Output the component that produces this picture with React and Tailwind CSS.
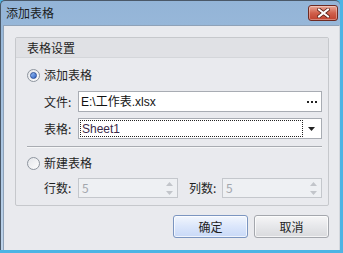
import React from 'react';

const font = { fontFamily: '"Noto Sans CJK SC", "Liberation Sans", sans-serif' };

function Radio({ checked }) {
  return (
    <span className="relative flex h-[13px] w-[13px] items-center justify-center rounded-full border border-[#8e959e] bg-gradient-to-br from-[#e4e6ea] to-[#fdfdfd]">
      {checked && (
        <span className="h-[7px] w-[7px] rounded-full border border-[#2a4f9a] bg-gradient-to-br from-[#9cc0f2] to-[#2f63c8]" />
      )}
    </span>
  );
}

function Spin({ width }) {
  return (
    <div className={`flex h-[20px] ${width} items-center justify-between border border-[#c4c7cc] bg-[#eef0f3] pl-[3px] pr-[4px]`}>
      <span className="text-[12px] text-[#a3a7ad]">5</span>
      <span className="flex flex-col gap-[5px]">
        <svg width="7" height="4" viewBox="0 0 7 4"><path d="M3.5 0L7 4H0z" fill="#c2c5ca" /></svg>
        <svg width="7" height="4" viewBox="0 0 7 4"><path d="M0 0h7L3.5 4z" fill="#c2c5ca" /></svg>
      </span>
    </div>
  );
}

export default function App() {
  return (
    <div className="h-[253px] w-[343px] overflow-hidden bg-[#4db4e4] pr-[3px] pb-[3px]" style={font}>
      <div className="flex h-full flex-col rounded-tl-[5px] rounded-tr-[5px] border-l border-t border-[#4a5868] bg-gradient-to-b from-[#93b4d7] to-[#bdd3ea]">
        {/* Title bar */}
        <div className="flex h-[24px] shrink-0 items-center justify-between pl-[5px] pr-[2px]">
          <span className="text-[12px] leading-none text-[#1b1b1b]">添加表格</span>
          <div className="flex h-[16px] w-[30px] items-center justify-center rounded-[3px] border border-[#6e2a22] bg-gradient-to-b from-[#e9a898] via-[#d0604c] to-[#c0412e] shadow-[inset_0_0_0_1px_rgba(255,255,255,0.35)]">
            <svg width="13" height="10" viewBox="0 0 13 10">
              <path d="M2 1.5L11 8.5M11 1.5L2 8.5" stroke="#5a2018" strokeWidth="3.6" strokeLinecap="square" />
              <path d="M2 1.5L11 8.5M11 1.5L2 8.5" stroke="#ffffff" strokeWidth="2" strokeLinecap="square" />
            </svg>
          </div>
        </div>

        {/* Content */}
        <div className="ml-[2px] flex flex-1 flex-col border-l border-r border-t border-l-[#8fa2b8] border-r-[#d3d7dd] border-t-[#8fa2b8] bg-[#e9eaee] pl-[11px] pr-[10px] pt-[11px]">
          {/* Group box */}
          <div className="flex h-[169px] flex-col rounded-[2px] border border-[#c6c8cc] bg-[#e9eaee]">
            <div className="flex h-[20px] items-center border-b border-[#d4d6da] bg-[#e0e1e5] pl-[11px] text-[12px] text-[#1e1e1e]">
              表格设置
            </div>
            <div className="flex flex-col pl-[11px] pr-[6px]">
              <label className="mt-[9px] flex h-[16px] items-center gap-[4px] text-[12px] text-[#1e1e1e]">
                <Radio checked />
                <span>添加表格</span>
              </label>

              <div className="mt-[8px] flex items-center">
                <span className="w-[51px] pl-[17px] text-[12px] text-[#1e1e1e]">文件:</span>
                <div className="flex h-[21px] flex-1 items-center justify-between border border-[#a8acb3] bg-white pl-[2px] pr-[4px]">
                  <span className="text-[12px] text-[#111]" style={{ fontFamily: '"Liberation Sans", "Noto Sans CJK SC", sans-serif' }}>
                    E:\工作表.xlsx
                  </span>
                  <span className="flex gap-[2px]">
                    <span className="h-[2px] w-[2px] bg-[#222]" />
                    <span className="h-[2px] w-[2px] bg-[#222]" />
                    <span className="h-[2px] w-[2px] bg-[#222]" />
                  </span>
                </div>
              </div>

              <div className="mt-[6px] flex items-center">
                <span className="w-[51px] pl-[17px] text-[12px] text-[#1e1e1e]">表格:</span>
                <div className="flex h-[21px] flex-1 items-center border border-[#a8acb3] bg-white p-[1px]">
                  <div className="flex h-full flex-1 items-center border border-dotted border-[#222] pl-[1px]">
                    <span className="text-[12px] text-[#3a2a4a]" style={{ fontFamily: '"Liberation Sans", sans-serif' }}>Sheet1</span>
                  </div>
                  <div className="flex w-[17px] items-center justify-center">
                    <svg width="7" height="4" viewBox="0 0 7 4"><path d="M0 0h7L3.5 4z" fill="#222" /></svg>
                  </div>
                </div>
              </div>

              <div className="mt-[7px] h-px bg-[#a9acb2]" />
              <div className="h-px bg-white/60" />

              <label className="mt-[7px] flex h-[16px] items-center gap-[4px] text-[12px] text-[#1e1e1e]">
                <Radio />
                <span>新建表格</span>
              </label>

              <div className="mt-[7px] flex items-center">
                <span className="w-[51px] pl-[17px] text-[12px] text-[#1e1e1e]">行数:</span>
                <Spin width="w-[100px]" />
                <span className="ml-[11px] w-[33px] text-[12px] text-[#1e1e1e]">列数:</span>
                <Spin width="flex-1" />
              </div>
            </div>
          </div>

          {/* Buttons */}
          <div className="mt-[9px] flex justify-end gap-[6px]">
            <button className="h-[23px] w-[75px] rounded-[3px] border border-[#7b95c0] bg-gradient-to-b from-[#f2f6fd] via-[#dbe6fb] to-[#c8d9f7] text-[12px] text-[#1e1e1e] shadow-[inset_0_0_0_1px_rgba(255,255,255,0.7)]">
              确定
            </button>
            <button className="h-[23px] w-[75px] rounded-[3px] border border-[#a4a7ad] bg-gradient-to-b from-[#f6f6f7] via-[#e6e7ea] to-[#d9dadd] text-[12px] text-[#1e1e1e] shadow-[inset_0_0_0_1px_rgba(255,255,255,0.7)]">
              取消
            </button>
          </div>
        </div>
      </div>
    </div>
  );
}
